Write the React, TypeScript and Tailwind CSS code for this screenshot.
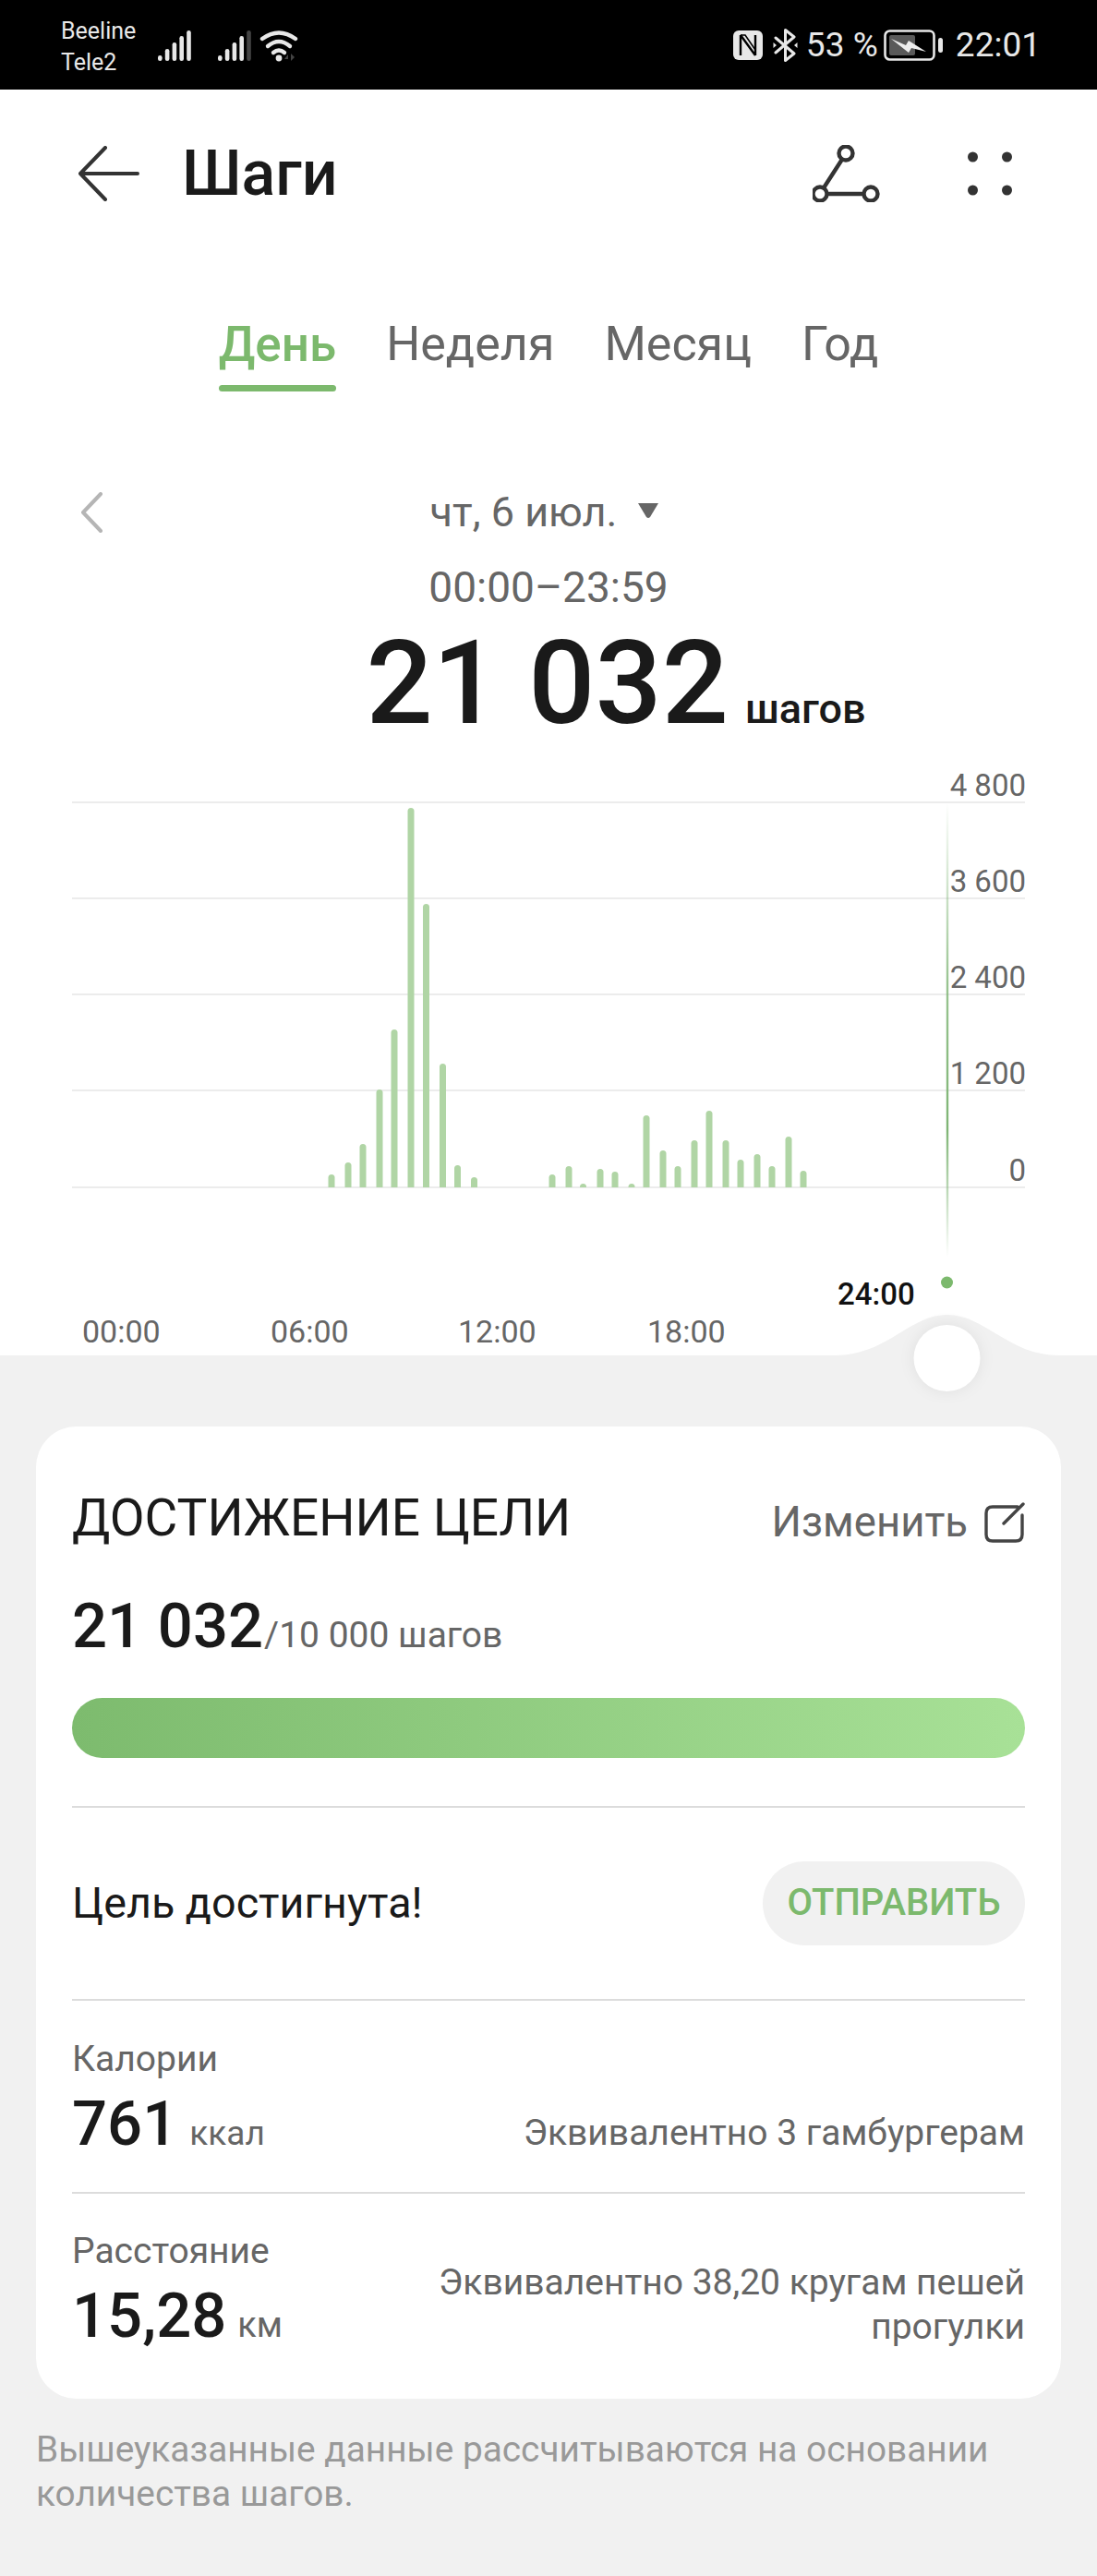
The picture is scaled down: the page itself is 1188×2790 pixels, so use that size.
import React from 'react';

const BAR_XS = [359, 377, 393, 411, 427, 445, 461.5, 479.5, 495.5, 513.5, 598, 616, 631.5, 650, 666, 684, 700, 718, 734, 752, 768, 786, 802, 820, 836, 854, 870];
const BAR_HS = [14, 27, 47, 106, 171, 411, 307, 134, 24, 11, 14, 23, 4, 20, 17, 4, 78, 40, 23, 51, 83, 51, 30, 36, 23, 55, 18];
const GRID = [
  { y: 868, label: '4 800' },
  { y: 972, label: '3 600' },
  { y: 1076, label: '2 400' },
  { y: 1180, label: '1 200' },
  { y: 1285, label: '0' },
];
const TICKS = [
  { x: 89, label: '00:00' },
  { x: 293, label: '06:00' },
  { x: 496, label: '12:00' },
  { x: 701, label: '18:00' },
];

const SignalBars = ({ lastDim = false }: { lastDim?: boolean }) => (
  <svg width="38" height="36" viewBox="0 0 38 36">
    {[28, 21, 14, 7, 1].map((top, i) => (
      <rect key={i} x={1 + i * 7.8} y={top + 1} width="4.6" height={35 - top - 1} rx="2.3" fill={lastDim && i === 4 ? '#444' : '#e8e8e8'} />
    ))}
  </svg>
);

const Bar = ({ x, h }: { x: number; h: number }) => {
  const top = 1285 - h;
  const r = Math.min(3.5, h);
  return <path d={`M${x - 3.5} 1285 V${top + r} Q${x - 3.5} ${top} ${x} ${top} Q${x + 3.5} ${top} ${x + 3.5} ${top + r} V1285 Z`} fill="#b0d5a5" />;
};

const Chart = () => (
  <div className="relative h-[627px]">
    <svg className="absolute left-0 -top-[10px] w-[1188px] h-[690px] font-['Roboto',sans-serif]" viewBox="0 830 1188 690">
      <defs>
        <linearGradient id="cursor" gradientUnits="userSpaceOnUse" x1="0" y1="868" x2="0" y2="1360">
          <stop offset="0" stopColor="#7fb575" stopOpacity="0" />
          <stop offset="0.4" stopColor="#7fb575" stopOpacity="0.8" />
          <stop offset="0.72" stopColor="#7fb575" stopOpacity="1" />
          <stop offset="1" stopColor="#7fb575" stopOpacity="0" />
        </linearGradient>
      </defs>
      {GRID.map((g) => (
        <g key={g.y}>
          <line x1="78" x2="1110" y1={g.y} y2={g.y} stroke="#e6e6e6" strokeWidth="1.5" />
          <text x="1111" y={g.y - 7} textAnchor="end" fontSize="33" fill="#666">{g.label}</text>
        </g>
      ))}
      {BAR_XS.map((x, i) => <Bar key={x} x={x} h={BAR_HS[i]} />)}
      <rect x="1024.8" y="868" width="2.4" height="492" fill="url(#cursor)" />
      <circle cx="1025.5" cy="1388" r="6.5" fill="#7cb96d" />
      {TICKS.map((t) => (
        <text key={t.x} x={t.x} y="1453" fontSize="34" fill="#666">{t.label}</text>
      ))}
      <text x="907" y="1412" fontSize="33" fontWeight="500" fill="#111">24:00</text>
      <path d="M905 1467 C960 1467 985 1423 1026 1423 C1067 1423 1092 1467 1147 1467 Z" fill="#f1f1f1" />
      <circle cx="1025.5" cy="1470" r="36" fill="#fff" className="drop-shadow-[0_0_8px_rgba(0,0,0,0.07)]" />
    </svg>
  </div>
);

export default function App() {
  return (
    <div className="w-[1188px] h-[2790px] bg-[#f1f1f1] font-['Roboto',sans-serif] overflow-hidden">
      {/* status bar */}
      <div className="h-[97px] bg-black flex items-center justify-between pl-[66px] pr-[61px] text-[#e8e8e8]">
        <div className="flex items-center">
          <div className="flex flex-col text-[25px] leading-[34px] w-[104px] pt-[4px]">
            <span>Beeline</span>
            <span>Tele2</span>
          </div>
          <SignalBars />
          <div className="w-[27px]" />
          <SignalBars lastDim />
          <svg className="ml-[8px]" width="44" height="36" viewBox="0 0 44 36" fill="none">
            <path d="M3 11 Q21 -2 39 11" stroke="#e8e8e8" strokeWidth="4.4" strokeLinecap="round" />
            <path d="M9 19 Q21 9 33 19" stroke="#e8e8e8" strokeWidth="4.4" strokeLinecap="round" />
            <path d="M15 26 Q21 21 27 26" stroke="#e8e8e8" strokeWidth="4.4" strokeLinecap="round" />
            <circle cx="21" cy="32" r="3.4" fill="#e8e8e8" />
            <path d="M27 33 L31 28 V33 Z M34 27 V35 L38 31 Z" fill="#444" />
          </svg>
        </div>
        <div className="flex items-center text-[37px] leading-none">
          <svg width="33" height="32" viewBox="0 0 33 32">
            <rect x="0" y="0" width="32" height="32" rx="6" fill="#e8e8e8" />
            <path d="M8 5 V27 M8 5 L24 27 M24 5 V27" stroke="#000" strokeWidth="2.4" fill="none" />
            <path d="M8 5 L13 5 L24 21" stroke="#000" strokeWidth="1.6" fill="none" />
          </svg>
          <svg className="ml-[10px]" width="27" height="36" viewBox="0 0 27 36" fill="none">
            <path d="M3 10 L23 27 L13.5 34.5 V1.5 L23 9 L3 26" stroke="#e8e8e8" strokeWidth="3" strokeLinejoin="round" strokeLinecap="round" />
            <path d="M0.5 15 L4 18 L0.5 21 Z M26.5 15 L23 18 L26.5 21 Z" fill="#e8e8e8" />
          </svg>
          <span className="ml-[9px] w-[84px] whitespace-nowrap">53 %</span>
          <svg width="65" height="34" viewBox="0 0 65 34" fill="none">
            <rect x="1.5" y="1.5" width="53" height="31" rx="5" stroke="#e8e8e8" strokeWidth="2.6" />
            <rect x="6" y="6" width="28" height="22" rx="2" fill="#5a5a5a" />
            <path d="M8 10 L24 17 L27 12 L46 24 L30 20 L27 25 Z" fill="#efefef" />
            <rect x="59" y="9" width="5" height="16" rx="2.5" fill="#e8e8e8" />
          </svg>
          <span className="ml-[13px]">22:01</span>
        </div>
      </div>

      <div className="bg-white">
        {/* header */}
        <div className="h-[182px] flex items-center relative pl-[85px]">
          <svg width="66" height="60" viewBox="0 0 66 60" fill="none" stroke="#333" strokeWidth="4" strokeLinecap="round" strokeLinejoin="round">
            <path d="M29 2 L2 30 L29 58 M2 30 H64" />
          </svg>
          <h1 className="ml-[46px] text-[68px] leading-none font-medium text-[#1a1a1a]">Шаги</h1>
          <div className="ml-auto mr-[92px] flex items-center gap-[94px]">
            <svg width="74" height="62" viewBox="0 0 74 62" fill="none" stroke="#333" strokeWidth="4.4">
              <circle cx="36" cy="9" r="7.5" />
              <circle cx="8" cy="53" r="7.5" />
              <circle cx="63" cy="53" r="7.5" />
              <path d="M32 15.5 L12 46.5 M15.5 53 H55.5" />
            </svg>
            <svg width="48" height="48" viewBox="0 0 48 48" fill="#333">
              <circle cx="5.5" cy="6" r="5.5" />
              <circle cx="42.5" cy="6" r="5.5" />
              <circle cx="5.5" cy="42" r="5.5" />
              <circle cx="42.5" cy="42" r="5.5" />
            </svg>
          </div>
        </div>

        {/* tabs */}
        <div className="flex justify-center gap-[54px] mt-[62px] text-[52px] leading-[64px] text-[#666]">
          <div className="flex flex-col text-[#7cb96d] font-medium text-[53px]">
            <span>День</span>
            <div className="h-[7px] rounded-full bg-[#7cb96d] mt-[12px]" />
          </div>
          <span>Неделя</span>
          <span>Месяц</span>
          <span>Год</span>
        </div>

        {/* date */}
        <div className="relative mt-[107px] flex justify-center items-center h-[48px] pr-[8px] text-[45px] leading-[48px] text-[#666]">
          <svg className="absolute left-[86px] top-[2px]" width="26" height="44" viewBox="0 0 26 44" fill="none" stroke="#b5b5b5" strokeWidth="4" strokeLinecap="round" strokeLinejoin="round">
            <path d="M23 2 L4 22 L23 42" />
          </svg>
          <span>чт, 6 июл.</span>
          <svg className="ml-[22px] -mt-[4px]" width="24" height="18" viewBox="0 0 24 18">
            <path d="M1 1 H23 L14 16 Q12 18 10 16 Z" fill="#666" />
          </svg>
        </div>
        <div className="mt-[30px] text-center text-[46px] leading-[54px] text-[#666]">00:00–23:59</div>

        {/* total */}
        <div className="flex justify-center items-baseline mt-[13px] pl-[146px] text-[#1a1a1a] font-medium">
          <span className="text-[127px] leading-[128px]">21 032</span>
          <span className="text-[45px] leading-none ml-[18px]">шагов</span>
        </div>

        <div className="h-[37px]" />
        <Chart />
      </div>

      {/* goal card */}
      <div className="mx-[39px] mt-[77px] bg-white rounded-[44px] px-[39px] h-[1053px] flex flex-col relative">
        <div className="flex justify-between items-center pt-[70px]">
          <span className="text-[55px] leading-[60px] text-[#1a1a1a] -mt-[10px]">ДОСТИЖЕНИЕ ЦЕЛИ</span>
          <div className="flex items-center text-[45.5px] text-[#666]">
            <span>Изменить</span>
            <svg className="ml-[18px]" width="44" height="44" viewBox="0 0 44 44" fill="none" stroke="#444" strokeWidth="3.4" strokeLinecap="round" strokeLinejoin="round">
              <path d="M36 5 H9 Q2 5 2 12 V35 Q2 42 9 42 H34 Q41 42 41 35 V14 M21 23 L42 2" />
            </svg>
          </div>
        </div>
        <div className="flex items-baseline mt-[40px] text-[#1a1a1a]">
          <span className="text-[67px] leading-[76px] font-medium">21 032</span>
          <span className="ml-[1px] text-[39px] text-[#666]">/10 000 шагов</span>
        </div>
        <div className="h-[65px] mt-[38px] rounded-full bg-gradient-to-r from-[#7dbb6e] to-[#a8e197]" />
        <div className="h-[2px] bg-[#dcdcdc] mt-[52px]" />
        <div className="flex justify-between items-center h-[207px]">
          <span className="text-[46.7px] text-[#1a1a1a]">Цель достигнута!</span>
          <button className="h-[91px] w-[284px] rounded-full bg-[#f1f1f1] text-[40px] font-medium text-[#7cb96d]">ОТПРАВИТЬ</button>
        </div>
        <div className="h-[2px] bg-[#dcdcdc]" />
        <div className="flex justify-between items-end h-[207px] pb-[35px]">
          <div className="flex flex-col">
            <span className="text-[39px] leading-[46px] text-[#666]">Калории</span>
            <div className="flex items-baseline mt-[12px] text-[#1a1a1a]">
              <span className="text-[67px] leading-[70px] font-medium">761</span>
              <span className="ml-[13px] text-[37px] text-[#666]">ккал</span>
            </div>
          </div>
          <span className="text-[39px] leading-[50px] text-[#666] mb-[4px]">Эквивалентно 3 гамбургерам</span>
        </div>
        <div className="h-[2px] bg-[#dcdcdc]" />
        <div className="flex justify-between items-end pt-[39px]">
          <div className="flex flex-col">
            <span className="text-[39px] leading-[46px] text-[#666]">Расстояние</span>
            <div className="flex items-baseline mt-[12px] text-[#1a1a1a]">
              <span className="text-[67px] leading-[70px] font-medium">15,28</span>
              <span className="ml-[12px] text-[38px] text-[#666]">км</span>
            </div>
          </div>
          <span className="w-[660px] text-right text-[39px] leading-[48px] text-[#666] mb-[3px]">Эквивалентно 38,20 кругам пешей прогулки</span>
        </div>
      </div>

      <p className="mx-[39px] mt-[31px] text-[38.8px] leading-[48px] text-[#999]">Вышеуказанные данные рассчитываются на основании количества шагов.</p>
    </div>
  );
}
